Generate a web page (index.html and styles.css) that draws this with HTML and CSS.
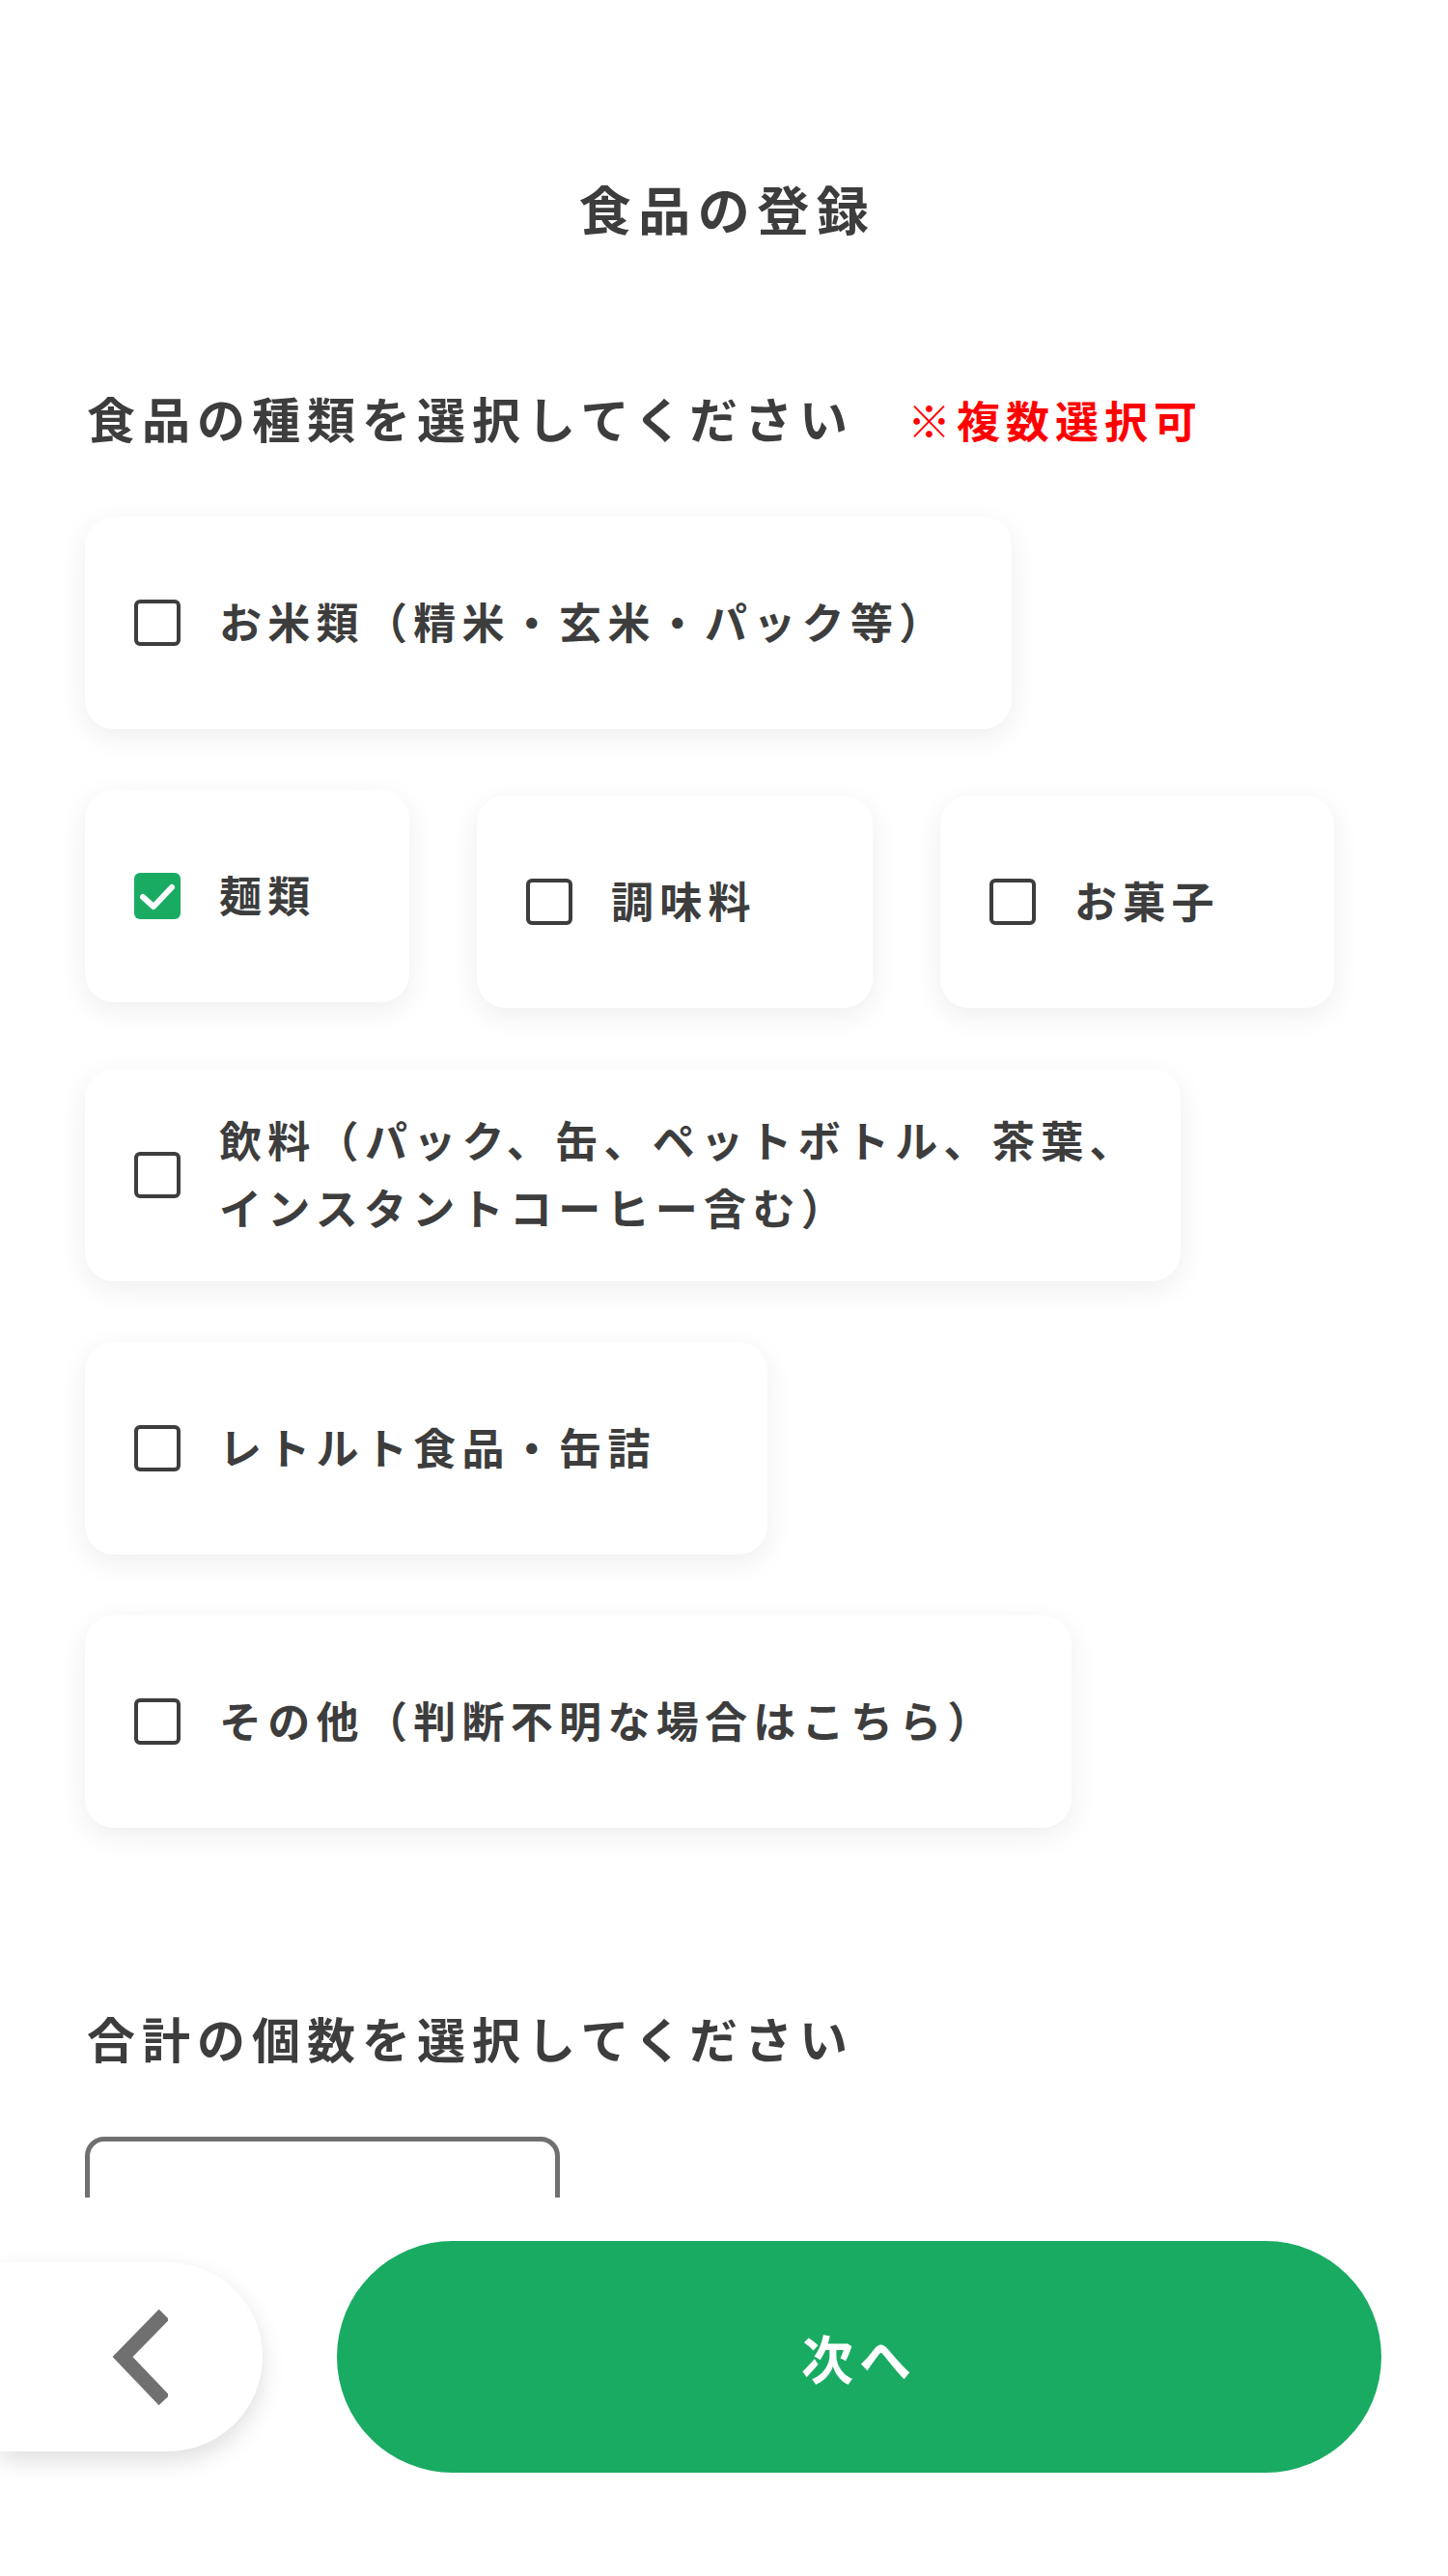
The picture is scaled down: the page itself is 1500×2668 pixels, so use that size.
FILE: index.html
```html
<!DOCTYPE html>
<html lang="ja">

<head>
    <meta charset="utf-8">
    <title>食品の登録</title>
    <link rel="stylesheet" href="styles.css">
</head>

<body>
    <div class="page">
        <h1 class="page-title">食品の登録</h1>

        <section class="section">
            <h2 class="section-title">食品の種類を選択してください<span class="note">※複数選択可</span></h2>
            <div class="options">
                <label class="option option-rice">
                    <span class="check"></span>
                    <span class="option-text">お米類（精米・玄米・パック等）</span>
                </label>
                <label class="option option-noodle checked">
                    <span class="check">
                        <svg viewBox="0 0 48 48" width="48" height="48">
                            <polyline points="9,25 20,35 39,15" fill="none" stroke="#fff" stroke-width="6" stroke-linecap="round" stroke-linejoin="round" />
                        </svg>
                    </span>
                    <span class="option-text">麺類</span>
                </label>
                <label class="option option-seasoning">
                    <span class="check"></span>
                    <span class="option-text">調味料</span>
                </label>
                <label class="option option-snack">
                    <span class="check"></span>
                    <span class="option-text">お菓子</span>
                </label>
                <label class="option option-drink">
                    <span class="check"></span>
                    <span class="option-text">飲料（パック、缶、ペットボトル、茶葉、インスタントコーヒー含む）</span>
                </label>
                <label class="option option-retort">
                    <span class="check"></span>
                    <span class="option-text">レトルト食品・缶詰</span>
                </label>
                <label class="option option-other">
                    <span class="check"></span>
                    <span class="option-text">その他（判断不明な場合はこちら）</span>
                </label>
            </div>
        </section>

        <section class="section section-count">
            <h2 class="section-title">合計の個数を選択してください</h2>
            <div class="count-select"></div>
        </section>
    </div>

    <footer class="footer">
        <button class="back-btn" aria-label="戻る">
            <svg viewBox="0 0 60 100" width="60" height="100">
                <polyline points="56,6 13,50 56,95" fill="none" stroke="#707070" stroke-width="15" stroke-linejoin="miter" />
            </svg>
        </button>
        <button class="next-btn">次へ</button>
    </footer>
</body>

</html>
```

FILE: styles.css
```css
body {
    margin: 0;
    background-color: #fff;
    font-family: "Noto Sans CJK JP", "Noto Sans", sans-serif;
    font-weight: 700;
    color: #3d3d3d;
}

.page {
    padding: 177px 88px 420px;
}

.page-title {
    margin: 0;
    text-align: center;
    font-size: 54px;
    line-height: 78px;
    letter-spacing: 7.5px;
    padding-left: 7px;
}

.section {
    margin-top: 141px;
}

.section-title {
    margin: 0;
    padding-left: 2px;
    font-size: 50px;
    line-height: 72px;
    letter-spacing: 7px;
}

.note {
    margin-left: 55px;
    color: #ff0000;
    font-size: 45px;
    letter-spacing: 6px;
}

.options {
    display: flex;
    flex-wrap: wrap;
    align-items: flex-end;
    column-gap: 70px;
    row-gap: 63px;
    margin-top: 64px;
}

.option {
    box-sizing: border-box;
    height: 220px;
    padding: 0 20px 0 51px;
    display: flex;
    align-items: center;
    gap: 40px;
    background-color: #fff;
    border-radius: 30px;
    box-shadow: 0 8px 30px rgba(0, 0, 0, 0.07);
    cursor: pointer;
}

.option.checked {
    margin-bottom: 6px;
}

.option-rice { width: 960px; }
.option-noodle { width: 336px; }
.option-seasoning { width: 410px; }
.option-snack { width: 408px; }
.option-drink { width: 1135px; }
.option-retort { width: 707px; }
.option-other { width: 1022px; }

.check {
    flex: none;
    box-sizing: border-box;
    width: 48px;
    height: 48px;
    border: 4px solid #3d3d3d;
    border-radius: 6px;
    background-color: #fff;
}

.option.checked .check {
    border: none;
    background-color: #1aab63;
}

.check svg {
    display: block;
}

.option-text {
    font-size: 44px;
    line-height: 70px;
    letter-spacing: 6.3px;
    position: relative;
    top: -2px;
}

.section-count {
    margin-top: 181px;
}

.count-select {
    box-sizing: border-box;
    width: 492px;
    height: 110px;
    margin-top: 67px;
    border: 5px solid #707070;
    border-radius: 20px;
}

.footer {
    position: fixed;
    left: 0;
    right: 0;
    bottom: 0;
    box-sizing: border-box;
    height: 392px;
    padding: 0 69px 62px 0;
    display: flex;
    align-items: center;
    gap: 77px;
    background-color: #fff;
}

.back-btn {
    flex: none;
    width: 272px;
    height: 196px;
    padding: 0 0 0 16px;
    display: flex;
    align-items: center;
    justify-content: center;
    border: none;
    border-radius: 0 98px 98px 0;
    background-color: #fff;
    box-shadow: 0 10px 24px rgba(0, 0, 0, 0.13);
    cursor: pointer;
}

.next-btn {
    flex: 1;
    height: 240px;
    border: none;
    border-radius: 120px;
    background-color: #1aab63;
    color: #fff;
    font-family: inherit;
    font-weight: 700;
    font-size: 54px;
    letter-spacing: 6px;
    padding-left: 6px;
    cursor: pointer;
}

.next-btn:hover,
.back-btn:hover {
    opacity: 0.8;
}
```
